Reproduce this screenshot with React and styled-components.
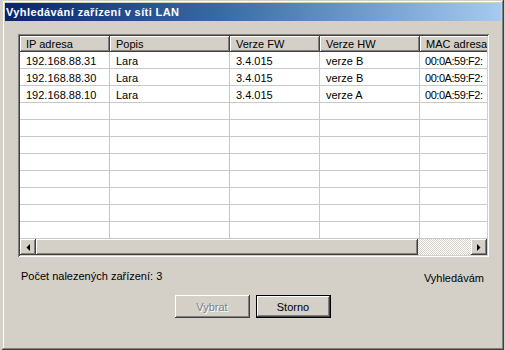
import React from "react";
import styled, { createGlobalStyle, css } from "styled-components";

const Global = createGlobalStyle`
  html, body { margin: 0; padding: 0; background: #d4d0c8; }
  body { width: 505px; height: 350px; overflow: hidden; font-family: "Liberation Sans", Arial, sans-serif; font-size: 11px; color: #000; }
`;

const raised = css`
  box-shadow: inset -1px -1px #404040, inset 1px 1px #fff, inset -2px -2px #808080, inset 2px 2px #d4d0c8;
`;

const Window = styled.div`
  margin-left: 2px;
  width: 502px;
  height: 350px;
  box-sizing: border-box;
  padding: 3px;
  background: #d4d0c8;
  box-shadow: inset -1px -1px #404040, inset 1px 1px #d4d0c8, inset -2px -2px #808080, inset 2px 2px #fff;
  display: flex;
  flex-direction: column;
`;

const TitleBar = styled.div`
  height: 18px;
  background: linear-gradient(to right, #0a246a 0%, #3a6ea5 45%, #a6caf0 100%);
  display: flex;
  align-items: center;
  padding-left: 1px;
`;

const Title = styled.span`
  color: #fff;
  font-weight: bold;
  font-size: 11px;
  letter-spacing: 0.4px;
`;

const Body = styled.div`
  flex: 1;
  display: flex;
  flex-direction: column;
  padding: 13px 12px 0 13px;
`;

const ListFrame = styled.div`
  height: 223px;
  box-sizing: border-box;
  padding: 2px;
  background: #fff;
  box-shadow: inset 1px 1px #808080, inset -1px -1px #fff, inset 2px 2px #404040, inset -2px -2px #d4d0c8;
  display: flex;
  flex-direction: column;
`;

const Viewport = styled.div`
  flex: 1;
  overflow: hidden;
  background: #fff;
`;

const Grid = styled.div`
  display: grid;
  grid-template-columns: 90px 120px 90px 100px 110px;
  width: 510px;
`;

const HeaderCell = styled.div`
  height: 16px;
  box-sizing: border-box;
  padding: 0 6px;
  line-height: 16px;
  background: #d4d0c8;
  white-space: nowrap;
  overflow: hidden;
  box-shadow: inset -1px -1px #404040, inset 1px 1px #fff, inset -2px -2px #808080;
`;

const Cell = styled.div`
  height: 17px;
  box-sizing: border-box;
  padding: 1px 6px 0;
  line-height: 16px;
  border-right: 1px solid #c8c8c8;
  border-bottom: 1px solid #c8c8c8;
  white-space: nowrap;
  overflow: hidden;
  letter-spacing: ${(p) => (p.$tight ? "-0.45px" : "0")};
  padding-left: ${(p) => (p.$tight ? "5px" : "6px")};
`;

const HScroll = styled.div`
  height: 16px;
  display: flex;
  flex-shrink: 0;
`;

const ArrowButton = styled.div`
  width: 16px;
  height: 16px;
  box-sizing: border-box;
  background: #d4d0c8;
  ${raised};
  display: flex;
  align-items: center;
  justify-content: center;
`;

const Thumb = styled.div`
  width: 382px;
  height: 16px;
  box-sizing: border-box;
  background: #d4d0c8;
  ${raised};
`;

const Track = styled.div`
  flex: 1;
  height: 16px;
  background: repeating-conic-gradient(#d4d0c8 0 25%, #fff 0 50%) 0 0 / 2px 2px;
`;

const StatusRow = styled.div`
  display: flex;
  justify-content: space-between;
  padding: 13px 5px 0 3px;
  height: 15px;
`;

const StatusRight = styled.span`
  padding-top: 2px;
`;

const ButtonRow = styled.div`
  display: flex;
  justify-content: center;
  gap: 6px;
  margin-top: 10px;
  padding-right: 2px;
`;

const Button = styled.div`
  width: 75px;
  height: 23px;
  box-sizing: border-box;
  background: #d4d0c8;
  display: flex;
  align-items: center;
  justify-content: center;
  ${raised};
  ${(p) =>
    p.$default &&
    css`
      box-shadow: inset 0 0 0 1px #000, inset -2px -2px #404040, inset 2px 2px #fff,
        inset -3px -3px #808080;
    `}
  ${(p) =>
    p.$disabled &&
    css`
      color: #808080;
      text-shadow: 1px 1px #fff;
    `}
`;

const Tri = ({ dir }) => (
  <svg width="4" height="7" viewBox="0 0 4 7">
    {dir === "left" ? (
      <polygon points="4,0 4,7 0.5,3.5" fill="#000" />
    ) : (
      <polygon points="0,0 0,7 3.5,3.5" fill="#000" />
    )}
  </svg>
);

const headers = ["IP adresa", "Popis", "Verze FW", "Verze HW", "MAC adresa"];
const rows = [
  ["192.168.88.31", "Lara", "3.4.015", "verze B", "00:0A:59:F2:"],
  ["192.168.88.30", "Lara", "3.4.015", "verze B", "00:0A:59:F2:"],
  ["192.168.88.10", "Lara", "3.4.015", "verze A", "00:0A:59:F2:"],
];
while (rows.length < 11) rows.push(["", "", "", "", ""]);

export default function App() {
  return (
    <>
      <Global />
      <Window>
        <TitleBar>
          <Title>Vyhledávání zařízení v síti LAN</Title>
        </TitleBar>
        <Body>
          <ListFrame>
            <Viewport>
              <Grid>
                {headers.map((h) => (
                  <HeaderCell key={h}>{h}</HeaderCell>
                ))}
                {rows.map((r, i) =>
                  r.map((c, j) => (
                    <Cell key={i + "-" + j} $tight={j === 4}>
                      {c}
                    </Cell>
                  ))
                )}
              </Grid>
            </Viewport>
            <HScroll>
              <ArrowButton>
                <Tri dir="left" />
              </ArrowButton>
              <Thumb />
              <Track />
              <ArrowButton>
                <Tri dir="right" />
              </ArrowButton>
            </HScroll>
          </ListFrame>
          <StatusRow>
            <span>Počet nalezených zařízení: 3</span>
            <StatusRight>Vyhledávám</StatusRight>
          </StatusRow>
          <ButtonRow>
            <Button $disabled>Vybrat</Button>
            <Button $default>Storno</Button>
          </ButtonRow>
        </Body>
      </Window>
    </>
  );
}
